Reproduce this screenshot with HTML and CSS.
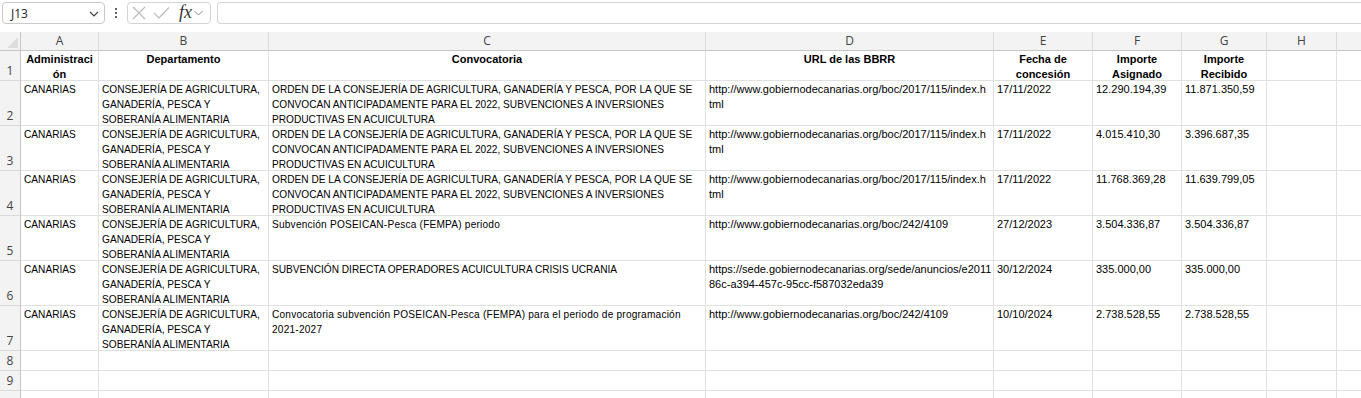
FILE: index.html
```html
<!DOCTYPE html>
<html lang="es">
<head>
<meta charset="utf-8">
<title>Hoja</title>
<link rel="stylesheet" href="styles.css">
</head>
<body>
<div class="toolbar">
  <div class="namebox">
    <span class="ref">J13</span>
    <svg class="chev" width="10" height="6" viewBox="0 0 10 6"><path d="M1 1 L5 5 L9 1" fill="none" stroke="#444" stroke-width="1.2"/></svg>
  </div>
  <div class="dots"><span></span><span></span><span></span></div>
  <div class="fxbox">
    <svg width="14" height="14" viewBox="0 0 14 14"><path d="M1 1 L13 13 M13 1 L1 13" stroke="#b8b8b8" stroke-width="1.1" fill="none"/></svg>
    <svg width="17" height="14" viewBox="0 0 17 14"><path d="M1 7 L6 12 L16 1.5" stroke="#b8b8b8" stroke-width="1.1" fill="none"/></svg>
    <span class="fx">fx</span>
    <svg width="9" height="6" viewBox="0 0 9 6"><path d="M0.5 1 L4.5 5 L8.5 1" fill="none" stroke="#888" stroke-width="1"/></svg>
  </div>
  <div class="formula"></div>
</div>

<div class="sheet">
  <div class="row hdr">
    <div class="corner"><span class="tri"></span></div>
    <div class="ch">A</div><div class="ch">B</div><div class="ch">C</div><div class="ch">D</div><div class="ch">E</div><div class="ch">F</div><div class="ch">G</div><div class="ch">H</div><div class="ch"></div>
  </div>

  <div class="row r1">
    <div class="rh">1</div>
    <div class="c b">Administraci<br>ón</div>
    <div class="c b">Departamento</div>
    <div class="c b">Convocatoria</div>
    <div class="c b">URL de las BBRR</div>
    <div class="c b">Fecha de<br>concesión</div>
    <div class="c b">Importe<br>Asignado</div>
    <div class="c b">Importe<br>Recibido</div>
    <div class="c"></div><div class="c"></div>
  </div>

  <div class="row r2">
    <div class="rh">2</div>
    <div class="c t">CANARIAS</div>
    <div class="c t">CONSEJERÍA DE AGRICULTURA,<br>GANADERÍA, PESCA Y<br>SOBERANÍA ALIMENTARIA</div>
    <div class="c t">ORDEN DE LA CONSEJERÍA DE AGRICULTURA, GANADERÍA Y PESCA, POR LA QUE SE<br>CONVOCAN ANTICIPADAMENTE PARA EL 2022, SUBVENCIONES A INVERSIONES<br>PRODUCTIVAS EN ACUICULTURA</div>
    <div class="c n">http://www.gobiernodecanarias.org/boc/2017/115/index.h<br>tml</div>
    <div class="c n">17/11/2022</div>
    <div class="c n">12.290.194,39</div>
    <div class="c n">11.871.350,59</div>
    <div class="c"></div><div class="c"></div>
  </div>

  <div class="row r2">
    <div class="rh">3</div>
    <div class="c t">CANARIAS</div>
    <div class="c t">CONSEJERÍA DE AGRICULTURA,<br>GANADERÍA, PESCA Y<br>SOBERANÍA ALIMENTARIA</div>
    <div class="c t">ORDEN DE LA CONSEJERÍA DE AGRICULTURA, GANADERÍA Y PESCA, POR LA QUE SE<br>CONVOCAN ANTICIPADAMENTE PARA EL 2022, SUBVENCIONES A INVERSIONES<br>PRODUCTIVAS EN ACUICULTURA</div>
    <div class="c n">http://www.gobiernodecanarias.org/boc/2017/115/index.h<br>tml</div>
    <div class="c n">17/11/2022</div>
    <div class="c n">4.015.410,30</div>
    <div class="c n">3.396.687,35</div>
    <div class="c"></div><div class="c"></div>
  </div>

  <div class="row r2">
    <div class="rh">4</div>
    <div class="c t">CANARIAS</div>
    <div class="c t">CONSEJERÍA DE AGRICULTURA,<br>GANADERÍA, PESCA Y<br>SOBERANÍA ALIMENTARIA</div>
    <div class="c t">ORDEN DE LA CONSEJERÍA DE AGRICULTURA, GANADERÍA Y PESCA, POR LA QUE SE<br>CONVOCAN ANTICIPADAMENTE PARA EL 2022, SUBVENCIONES A INVERSIONES<br>PRODUCTIVAS EN ACUICULTURA</div>
    <div class="c n">http://www.gobiernodecanarias.org/boc/2017/115/index.h<br>tml</div>
    <div class="c n">17/11/2022</div>
    <div class="c n">11.768.369,28</div>
    <div class="c n">11.639.799,05</div>
    <div class="c"></div><div class="c"></div>
  </div>

  <div class="row r2">
    <div class="rh">5</div>
    <div class="c t">CANARIAS</div>
    <div class="c t">CONSEJERÍA DE AGRICULTURA,<br>GANADERÍA, PESCA Y<br>SOBERANÍA ALIMENTARIA</div>
    <div class="c t lc">Subvención POSEICAN-Pesca (FEMPA) periodo</div>
    <div class="c n">http://www.gobiernodecanarias.org/boc/242/4109</div>
    <div class="c n">27/12/2023</div>
    <div class="c n">3.504.336,87</div>
    <div class="c n">3.504.336,87</div>
    <div class="c"></div><div class="c"></div>
  </div>

  <div class="row r2">
    <div class="rh">6</div>
    <div class="c t">CANARIAS</div>
    <div class="c t">CONSEJERÍA DE AGRICULTURA,<br>GANADERÍA, PESCA Y<br>SOBERANÍA ALIMENTARIA</div>
    <div class="c t">SUBVENCIÓN DIRECTA OPERADORES ACUICULTURA CRISIS UCRANIA</div>
    <div class="c n">https://sede.gobiernodecanarias.org/sede/anuncios/e2011<br>86c-a394-457c-95cc-f587032eda39</div>
    <div class="c n">30/12/2024</div>
    <div class="c n">335.000,00</div>
    <div class="c n">335.000,00</div>
    <div class="c"></div><div class="c"></div>
  </div>

  <div class="row r2">
    <div class="rh">7</div>
    <div class="c t">CANARIAS</div>
    <div class="c t">CONSEJERÍA DE AGRICULTURA,<br>GANADERÍA, PESCA Y<br>SOBERANÍA ALIMENTARIA</div>
    <div class="c t lc">Convocatoria subvención POSEICAN-Pesca (FEMPA) para el periodo de programación<br>2021-2027</div>
    <div class="c n">http://www.gobiernodecanarias.org/boc/242/4109</div>
    <div class="c n">10/10/2024</div>
    <div class="c n">2.738.528,55</div>
    <div class="c n">2.738.528,55</div>
    <div class="c"></div><div class="c"></div>
  </div>

  <div class="row r8">
    <div class="rh">8</div>
    <div class="c"></div><div class="c"></div><div class="c"></div><div class="c"></div><div class="c"></div><div class="c"></div><div class="c"></div><div class="c"></div><div class="c"></div>
  </div>
  <div class="row r8">
    <div class="rh">9</div>
    <div class="c"></div><div class="c"></div><div class="c"></div><div class="c"></div><div class="c"></div><div class="c"></div><div class="c"></div><div class="c"></div><div class="c"></div>
  </div>
  <div class="row r8">
    <div class="rh"></div>
    <div class="c"></div><div class="c"></div><div class="c"></div><div class="c"></div><div class="c"></div><div class="c"></div><div class="c"></div><div class="c"></div><div class="c"></div>
  </div>
</div>
</body>
</html>
```

FILE: styles.css
```css
html, body {
  margin: 0;
  padding: 0;
  background: #ffffff;
  overflow: hidden;
}

body {
  width: 1361px;
  height: 398px;
  font-family: "Liberation Sans", Arial, sans-serif;
  color: #000;
}

/* ---------- formula bar ---------- */
.toolbar {
  height: 32px;
  display: flex;
  align-items: flex-start;
  padding: 2px 0 0 2px;
  box-sizing: border-box;
}

.namebox {
  width: 103px;
  height: 22px;
  box-sizing: border-box;
  border: 1px solid #c9c9c9;
  border-radius: 4px;
  display: flex;
  align-items: center;
  justify-content: space-between;
  padding: 0 5px 0 8px;
  font-family: "Open Sans", "Noto Sans", sans-serif;
  font-size: 12px;
  color: #222;
}

.namebox .chev { margin-top: 1px; }

.dots {
  width: 22px;
  height: 22px;
  display: flex;
  flex-direction: column;
  align-items: center;
  justify-content: center;
  gap: 2px;
}
.dots span {
  width: 2px;
  height: 2px;
  background: #333;
  border-radius: 1px;
}

.fxbox {
  width: 84px;
  height: 22px;
  box-sizing: border-box;
  border: 1px solid #d4d4d4;
  border-radius: 4px;
  display: flex;
  align-items: center;
  padding-left: 4px;
  gap: 7px;
}
.fx {
  font-family: "Liberation Serif", "DejaVu Serif", serif;
  font-style: italic;
  font-size: 18px;
  color: #333;
  margin-left: 2px;
  margin-right: -5px;
  line-height: 1;
  position: relative;
  top: -1px;
}

.formula {
  flex: 1;
  margin-left: 6px;
  height: 22px;
  box-sizing: border-box;
  border: 1px solid #d4d4d4;
  border-right: none;
  border-radius: 4px 0 0 4px;
}

/* ---------- sheet grid ---------- */
.sheet {
  width: 1400px;
}

.row {
  display: grid;
  grid-template-columns: 21px 78px 170px 437px 288px 99px 89px 85px 70px 70px;
}

.row > div {
  box-sizing: border-box;
  border-right: 1px solid #e1e1e1;
  border-bottom: 1px solid #e1e1e1;
  overflow: hidden;
  white-space: nowrap;
}

.hdr { height: 19px; }
.r1 { height: 30px; }
.r2 { height: 45px; }
.r8 { height: 20px; }

.corner {
  background: #f3f3f3;
  position: relative;
  border-bottom-color: #c6c6c6 !important;
  border-right-color: #c6c6c6 !important;
}
.tri {
  position: absolute;
  right: 2px;
  bottom: 2px;
  width: 0;
  height: 0;
  border-left: 11px solid transparent;
  border-bottom: 11px solid #dcdcdc;
}

.ch {
  background: #f3f3f3;
  border-bottom-color: #c6c6c6 !important;
  border-right-color: #dadada !important;
  text-align: center;
  font-family: "Open Sans", "Noto Sans", sans-serif;
  font-size: 12px;
  line-height: 18px;
  color: #444;
}

.rh {
  background: #f3f3f3;
  border-right-color: #c6c6c6 !important;
  border-bottom-color: #dadada !important;
  display: flex;
  align-items: flex-end;
  justify-content: center;
  padding-bottom: 1px;
  font-family: "Open Sans", "Noto Sans", sans-serif;
  font-size: 12px;
  line-height: 16px;
  color: #444;
}

.c {
  font-size: 11px;
  line-height: 15px;
  padding: 1px 3px 0 3px;
}

.c.t {
  font-size: 10.15px;
}

.c.t.lc {
  letter-spacing: 0.2px;
}

.c.b {
  font-weight: bold;
  text-align: center;
}
```
